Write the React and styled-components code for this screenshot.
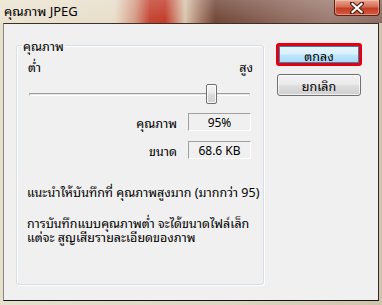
import React from 'react';
import styled, { createGlobalStyle } from 'styled-components';

const GlobalStyle = createGlobalStyle`
  html, body {
    margin: 0;
    padding: 0;
    background: #d9d1bd;
  }
  body {
    font-family: Tahoma, "Noto Sans Thai Looped", Loma, Garuda, "Noto Sans Thai", "Noto Sans", "DejaVu Sans", sans-serif;
    font-size: 12.5px;
    color: #000;
  }
`;

const Window = styled.div`
  width: 382px;
  height: 305px;
  display: flex;
  flex-direction: column;
  background: linear-gradient(90deg, #e6e0cf 0, #ddd5c1 60%, #cfc4ab 100%);
  overflow: hidden;
`;

const TitleBar = styled.div`
  height: 23px;
  flex: none;
  display: flex;
  align-items: flex-start;
  background:
    linear-gradient(180deg, rgba(255, 255, 255, 0.18) 0, rgba(255, 255, 255, 0) 100%),
    linear-gradient(90deg, #ebe4d2 0, #e7ddc9 115px, #d59a84 135px, #c4412f 150px,
      #c23a28 165px, #d9c6ae 185px, #a87d6a 200px, #6f4536 215px, #7d5446 245px,
      #8f6a5e 290px, #9a7a70 330px, #8c6c62 382px);
`;

const Title = styled.div`
  padding: 2px 0 0 4px;
  font-size: 13px;
  line-height: 17px;
`;

const CloseButton = styled.div`
  margin-left: auto;
  margin-right: 2px;
  width: 46px;
  height: 16px;
  box-sizing: border-box;
  border: 1px solid #5a2219;
  border-top: none;
  border-radius: 0 0 4px 4px;
  background: linear-gradient(180deg, #e9a996 0, #d46d56 45%, #c23d24 55%, #d65a3e 100%);
  box-shadow: inset 0 0 0 1px rgba(255, 210, 190, 0.45);
  display: flex;
  align-items: center;
  justify-content: center;
`;

const Client = styled.div`
  flex: 1;
  margin: 0 3px 4px 3px;
  border: 1px solid;
  border-color: #3d2f2a #2c2c2c #141414 #8f8676;
  background: #f0f0f0;
  display: flex;
  align-items: flex-start;
  padding-left: 12px;
`;

const GroupBox = styled.div`
  position: relative;
  margin-top: 21px;
  width: 248px;
  height: 240px;
  box-sizing: border-box;
  border: 1px solid #d5dfe5;
  border-radius: 3px;
  box-shadow: inset 1px 1px 0 #fff, 1px 1px 0 #fff;
  padding: 13px 10px 0 11px;
`;

const Legend = styled.span`
  position: absolute;
  top: -8px;
  left: 5px;
  padding: 0 1px;
  line-height: 15px;
  background: #f0f0f0;
`;

const RangeLabels = styled.div`
  display: flex;
  justify-content: space-between;
  line-height: 14px;
`;

const Slider = styled.div`
  position: relative;
  margin: 11px 0 0 1px;
  width: 221px;
  height: 20px;
  display: flex;
  align-items: center;
`;

const Track = styled.div`
  width: 100%;
  height: 3px;
  box-sizing: border-box;
  border: 1px solid;
  border-color: #9c9c9c #d6d6d6 #ffffff #b5b5b5;
  background: #e7e7e7;
`;

const Thumb = styled.div`
  position: absolute;
  top: 0;
  width: 11px;
  height: 20px;
  box-sizing: border-box;
  border: 1px solid #707070;
  border-radius: 2px;
  background: linear-gradient(180deg, #f6f6f6 0, #eaeaea 45%, #dadada 55%, #d2d2d2 100%);
  box-shadow: inset 0 0 0 1px rgba(255, 255, 255, 0.8);
`;

const ValueRows = styled.div`
  margin-top: 9px;
  display: flex;
  flex-direction: column;
  gap: 10px;
  padding-right: 2px;
`;

const ValueRow = styled.div`
  display: flex;
  justify-content: flex-end;
  align-items: center;
  gap: 11px;
  line-height: 18px;
`;

const ValueBox = styled.div`
  width: 63px;
  height: 18px;
  box-sizing: border-box;
  border: 1px solid;
  border-color: #a0a0a0 #ffffff #ffffff #a0a0a0;
  display: flex;
  align-items: center;
  justify-content: center;
  font-size: 12px;
`;

const Note = styled.p`
  margin: ${(p) => p.$gap}px 0 0 -1px;
  line-height: 14px;
  white-space: nowrap;
`;

const Buttons = styled.div`
  margin: 19px 0 0 12px;
  display: flex;
  flex-direction: column;
  gap: 8px;
`;

const Button = styled.button`
  width: ${(p) => (p.$focused ? 86 : 84)}px;
  height: ${(p) => (p.$focused ? 23 : 22)}px;
  margin-left: ${(p) => (p.$focused ? 0 : 1)}px;
  box-sizing: border-box;
  padding: 0;
  font: inherit;
  line-height: 14px;
  color: #000;
  border-radius: 3px;
  border: ${(p) => (p.$focused ? '3px solid #e3000f' : '1px solid #707070')};
  background: ${(p) =>
    p.$focused
      ? 'linear-gradient(180deg, #eaf6fd 0, #d9f0fc 45%, #bee6fd 55%, #a7d9f5 100%)'
      : 'linear-gradient(180deg, #f2f2f2 0, #ebebeb 45%, #dddddd 55%, #cfcfcf 100%)'};
  box-shadow: ${(p) =>
    p.$focused ? 'inset 0 0 0 1px #3c7fb1' : 'inset 0 0 0 1px rgba(255,255,255,0.7)'};
`;

const App = () => {
  const position = 0.8;

  return (
    <>
      <GlobalStyle />
      <Window>
        <TitleBar>
          <Title>คุณภาพ JPEG</Title>
          <CloseButton>
            <svg width="14" height="12" viewBox="0 0 14 12">
              <path d="M2 1.5 L12 10.5 M12 1.5 L2 10.5" stroke="#4a1d14" strokeWidth="4.2" strokeLinecap="square" />
              <path d="M2.5 2 L11.5 10 M11.5 2 L2.5 10" stroke="#fff" strokeWidth="2.2" strokeLinecap="square" />
            </svg>
          </CloseButton>
        </TitleBar>
        <Client>
          <GroupBox>
            <Legend>คุณภาพ</Legend>
            <RangeLabels>
              <span>ต่ำ</span>
              <span>สูง</span>
            </RangeLabels>
            <Slider>
              <Track />
              <Thumb style={{ left: `${position * 221}px` }} />
            </Slider>
            <ValueRows>
              <ValueRow>
                <span>คุณภาพ</span>
                <ValueBox>95%</ValueBox>
              </ValueRow>
              <ValueRow>
                <span>ขนาด</span>
                <ValueBox>68.6 KB</ValueBox>
              </ValueRow>
            </ValueRows>
            <Note $gap={25}>แนะนำให้บันทึกที่ คุณภาพสูงมาก (มากกว่า 95)</Note>
            <Note $gap={17}>
              การบันทึกแบบคุณภาพต่ำ จะได้ขนาดไฟล์เล็ก
              <br />
              แต่จะ สูญเสียรายละเอียดของภาพ
            </Note>
          </GroupBox>
          <Buttons>
            <Button $focused>ตกลง</Button>
            <Button>ยกเลิก</Button>
          </Buttons>
        </Client>
      </Window>
    </>
  );
};

export default App;
